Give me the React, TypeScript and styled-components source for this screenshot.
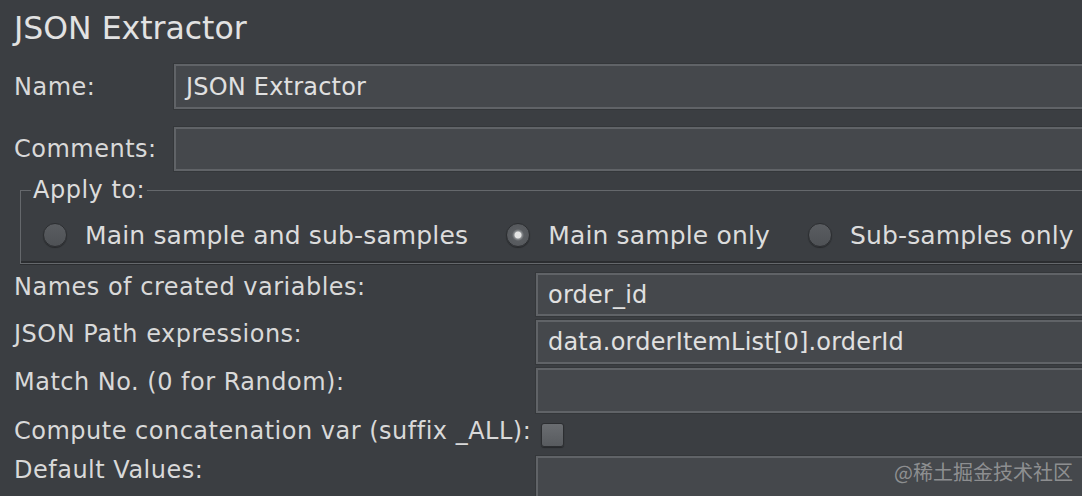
import styled, { createGlobalStyle } from 'styled-components';

const GlobalStyle = createGlobalStyle`
  html, body {
    margin: 0;
    padding: 0;
    background: #3b3e42;
    overflow: hidden;
  }
  body {
    font-family: "DejaVu Sans", "Noto Sans", sans-serif;
    color: #dcdcdc;
  }
`;

const Page = styled.div`
  position: relative;
  width: 1120px;
  height: 496px;
  padding-left: 14px;
  box-sizing: border-box;
  background: #3b3e42;
`;

const Title = styled.h1`
  margin: 0;
  height: 56px;
  line-height: 56px;
  font-size: 31.5px;
  font-weight: normal;
  color: #e2e2e2;
`;

const FormGrid = styled.div<{ $labelWidth: number; $gap: number; $align: string }>`
  display: grid;
  grid-template-columns: ${({ $labelWidth }) => $labelWidth}px 1fr;
  row-gap: ${({ $gap }) => $gap}px;
  align-items: ${({ $align }) => $align};
`;

const TopGrid = styled(FormGrid)`
  margin-top: 8px;
`;

const BottomGrid = styled(FormGrid)`
  margin-top: 9px;
`;

const Label = styled.div`
  font-size: 24px;
  line-height: 28px;
  letter-spacing: 0.5px;
  color: #d9d9d9;
  white-space: nowrap;
`;

const Field = styled.div<{ $height: number }>`
  height: ${({ $height }) => $height}px;
  box-sizing: border-box;
  background: #45484c;
  border: 2px solid #606367;
  box-shadow: 0 0 0 1px #34373a;
  padding-left: 10px;
  display: flex;
  align-items: center;
  font-size: 24px;
  letter-spacing: 0.2px;
  color: #e0e0e0;
  white-space: nowrap;
`;

const Group = styled.fieldset`
  margin: 5px 0 0 6px;
  padding: 0 0 0 10px;
  height: 88px;
  box-sizing: border-box;
  border: 1px solid #65686c;
  box-shadow: inset 0 -2px 0 #2b2d30, 0 1px 0 #2b2d30;
`;

const Legend = styled.legend`
  padding: 0 2px;
  font-size: 24px;
  line-height: 28px;
  letter-spacing: 0.5px;
  color: #dcdcdc;
`;

const RadioRow = styled.div`
  display: flex;
  align-items: center;
  height: 54px;
  padding: 4px 0 0 12px;
  gap: 38px;
`;

const RadioItem = styled.label`
  display: flex;
  align-items: center;
  gap: 18px;
  font-size: 25px;
  letter-spacing: 0.15px;
  color: #dcdcdc;
  white-space: nowrap;
`;

const RadioDot = styled.span<{ $checked?: boolean }>`
  width: 24px;
  height: 24px;
  border-radius: 50%;
  box-sizing: border-box;
  border: 1px solid #2c2e31;
  background: ${({ $checked }) =>
    $checked
      ? 'radial-gradient(circle, #e4e4e4 0 3px, #8a8d90 4px, #5a5d61 6px, #525559 100%)'
      : 'linear-gradient(#5a5d61, #4f5256)'};
  box-shadow: 0 1px 1px rgba(0, 0, 0, 0.35);
`;

const CheckCell = styled.div`
  height: 35px;
  display: flex;
  align-items: center;
`;

const CheckBox = styled.span`
  display: block;
  width: 23px;
  height: 24px;
  margin-left: 5px;
  box-sizing: border-box;
  border: 1px solid #2c2e31;
  border-radius: 3px;
  background: linear-gradient(#6a6d71, #585b5f);
  box-shadow: 0 1px 1px rgba(0, 0, 0, 0.35);
`;

const Watermark = styled.div`
  position: absolute;
  left: 894px;
  top: 457px;
  font-family: "Noto Sans CJK SC", "Noto Sans", sans-serif;
  font-size: 20px;
  color: rgba(205, 205, 205, 0.55);
  white-space: nowrap;
`;

const radios = [
  { label: 'Main sample and sub-samples', checked: false },
  { label: 'Main sample only', checked: true },
  { label: 'Sub-samples only', checked: false },
];

export default function App() {
  return (
    <>
      <GlobalStyle />
      <Page>
        <Title>JSON Extractor</Title>
        <TopGrid $labelWidth={160} $gap={18} $align="center">
          <Label>Name:</Label>
          <Field $height={45}>JSON Extractor</Field>
          <Label>Comments:</Label>
          <Field $height={44} />
        </TopGrid>
        <Group>
          <Legend>Apply to:</Legend>
          <RadioRow>
            {radios.map(r => (
              <RadioItem key={r.label}>
                <RadioDot $checked={r.checked} />
                {r.label}
              </RadioItem>
            ))}
          </RadioRow>
        </Group>
        <BottomGrid $labelWidth={522} $gap={4} $align="start">
          <Label>Names of created variables:</Label>
          <Field $height={43}>order_id</Field>
          <Label>JSON Path expressions:</Label>
          <Field $height={44}>data.orderItemList[0].orderId</Field>
          <Label>Match No. (0 for Random):</Label>
          <Field $height={45} />
          <Label>Compute concatenation var (suffix _ALL):</Label>
          <CheckCell>
            <CheckBox />
          </CheckCell>
          <Label>Default Values:</Label>
          <Field $height={50} />
        </BottomGrid>
        <Watermark>@稀土掘金技术社区</Watermark>
      </Page>
    </>
  );
}
